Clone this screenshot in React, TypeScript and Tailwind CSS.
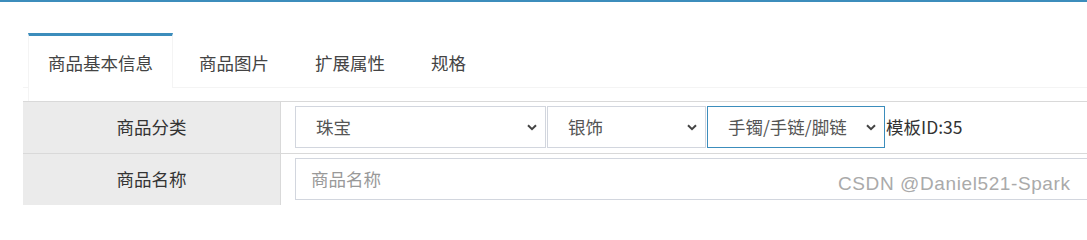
import React from "react";

function Chevron() {
  return (
    <svg width="10" height="7" viewBox="0 0 10 7" className="shrink-0">
      <polyline points="1,1.2 5,5.2 9,1.2" fill="none" stroke="#444" strokeWidth="2" />
    </svg>
  );
}

function FakeSelect({
  label,
  width,
  active,
}: {
  label: string;
  width: string;
  active?: boolean;
}) {
  return (
    <div
      className={`flex h-[42px] items-center justify-between border pl-[20px] pr-[8px] text-[#555] ${width} ${
        active ? "border-[#3c8dbc]" : "border-[#d2d6de]"
      }`}
    >
      <span className="leading-none">{label}</span>
      <Chevron />
    </div>
  );
}

export default function App() {
  const tabs = ["商品基本信息", "商品图片", "扩展属性", "规格"];
  return (
    <div className="relative h-[205px] w-[1087px] overflow-hidden bg-white font-['Noto_Sans_CJK_SC','Noto_Sans',sans-serif] text-[17.5px]">
      <div className="h-[2px] bg-[#3c8dbc]" />
      <div className="pl-[23px] pt-[31px]">
        <div className="flex h-[55px] items-start border-b border-[#f4f4f4] pl-[5px]">
          {tabs.map((t, i) =>
            i === 0 ? (
              <div
                key={t}
                className="-mb-px mr-[6px] h-[55px] border-x border-t-[3px] border-x-[#f4f4f4] border-t-[#3c8dbc] bg-white px-[19px] pt-[14px] leading-[25px] text-[#444]"
              >
                {t}
              </div>
            ) : (
              <div
                key={t}
                className="mr-[6px] h-[54px] border-x border-t-[3px] border-transparent px-[19px] pt-[14px] leading-[25px] text-[#444]"
              >
                {t}
              </div>
            )
          )}
        </div>
        <div className="ml-[5px] h-[13px] border-l border-[#f4f4f4]" />
        <div className="border-t border-[#d9d9d9]">
          <div className="flex h-[52px] border-b border-[#d9d9d9]">
            <div className="flex w-[258px] shrink-0 items-center justify-center border-r border-[#d9d9d9] bg-[#ebebeb] text-[#333]">
              商品分类
            </div>
            <div className="flex items-start pl-[14px] pt-[4px]">
              <FakeSelect label="珠宝" width="w-[251px]" />
              <div className="w-[1px]" />
              <FakeSelect label="银饰" width="w-[159px]" />
              <div className="w-[1px]" />
              <FakeSelect label="手镯/手链/脚链" width="w-[178px]" active />
              <div className="ml-[1px] flex h-[42px] items-center text-[#333]">模板ID:35</div>
            </div>
          </div>
          <div className="flex h-[52px] border-b border-[#d9d9d9]">
            <div className="flex w-[258px] shrink-0 items-center justify-center border-r border-[#d9d9d9] bg-[#ebebeb] text-[#333]">
              商品名称
            </div>
            <div className="flex flex-1 items-start pl-[14px] pt-[4px]">
              <div className="flex h-[42px] w-[900px] items-center border border-[#d2d6de] pl-[15px] text-[#999]">
                商品名称
              </div>
            </div>
          </div>
        </div>
      </div>
      <div className="absolute left-[838px] top-[170px] font-['Liberation_Sans',sans-serif] text-[19px] tracking-[0.6px] text-[#aaaaaa]">
        CSDN @Daniel521-Spark
      </div>
    </div>
  );
}
